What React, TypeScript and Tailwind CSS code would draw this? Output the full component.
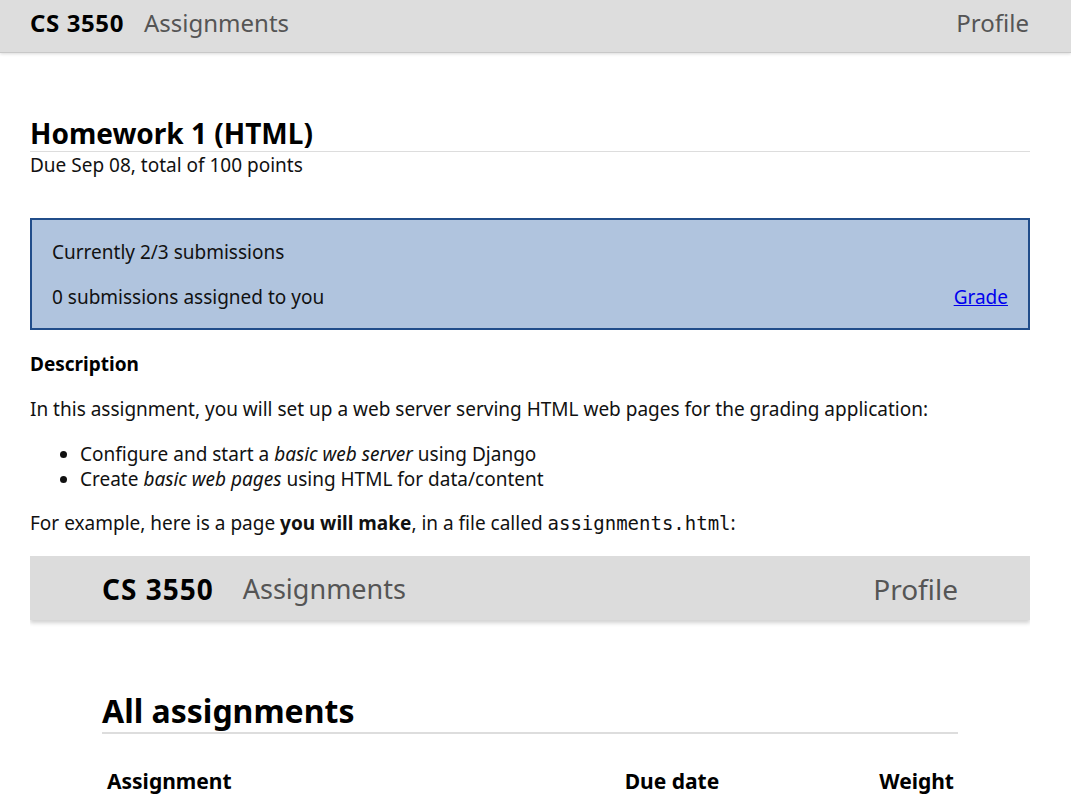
import React from "react";

const font = { fontFamily: '"Noto Sans", "Open Sans", sans-serif' };

export default function App() {
  return (
    <div className="min-h-[804px] bg-white text-[#111]" style={font}>
      <header className="h-[53px] bg-[#dddddd] border-b border-[#c8c8c8] shadow-[0_1px_3px_rgba(0,0,0,0.15)] flex items-start pt-[7px] px-[30px]">
        <span className="text-[24px] leading-[32px] font-bold text-black tracking-[0.6px]">CS 3550</span>
        <span className="ml-[20px] text-[24px] leading-[32px] text-[#555]">Assignments</span>
        <span className="ml-auto mr-[12px] text-[24px] leading-[32px] text-[#555]">Profile</span>
      </header>
      <main className="ml-[30px] w-[1000px]">
        <h1 className="mt-[62px] text-[28px] font-bold leading-[36px] text-black border-b border-[#dddddd] pb-0">
          Homework 1 (HTML)
        </h1>
        <p className="text-[19px] leading-[26px]">Due Sep 08, total of 100 points</p>
        <section className="mt-[40px] h-[112px] bg-[#b0c4de] border-2 border-[#214d8a] px-[20px] pt-[19px] text-[19px]">
          <p className="leading-[26px]">Currently 2/3 submissions</p>
          <div className="mt-[19px] flex justify-between leading-[26px]">
            <span>0 submissions assigned to you</span>
            <a href="#" className="text-[#0000ee] underline">Grade</a>
          </div>
        </section>
        <h2 className="mt-[21px] text-[19px] font-bold leading-[26px] text-black">Description</h2>
        <p className="mt-[19px] text-[19px] leading-[26px]">
          In this assignment, you will set up a web server serving HTML web pages for the grading application:
        </p>
        <ul className="mt-[20px] list-disc pl-[50px] text-[19px] leading-[25px]">
          <li>Configure and start a <em>basic web server</em> using Django</li>
          <li>Create <em>basic web pages</em> using HTML for data/content</li>
        </ul>
        <p className="mt-[18px] text-[19px] leading-[26px]">
          For example, here is a page <strong>you will make</strong>, in a file called{" "}
          <code style={{ fontFamily: '"DejaVu Sans Mono", monospace' }} className="text-[19px]">assignments.html</code>:
        </p>
        <div className="mt-[20px] h-[250px] overflow-hidden">
          <div className="h-[64px] bg-[#dcdcdc] shadow-[0_3px_4px_rgba(0,0,0,0.18)] flex items-center pt-[2px] px-[72px]">
            <span className="text-[28px] font-bold text-black tracking-[1px]">CS 3550</span>
            <span className="ml-[29px] text-[27px] text-[#555]">Assignments</span>
            <span className="ml-auto text-[28px] text-[#555]">Profile</span>
          </div>
          <div className="mx-[72px]">
            <h2 className="mt-[70px] text-[32px] font-bold leading-[42px] text-black border-b-2 border-[#dddddd]">All assignments</h2>
            <div className="mt-[32px] flex text-[21px] leading-[30px] font-bold text-black">
              <span className="ml-[5px]">Assignment</span>
              <span className="ml-auto">Due date</span>
              <span className="ml-[160px] mr-[4px]">Weight</span>
            </div>
          </div>
        </div>
      </main>
    </div>
  );
}
